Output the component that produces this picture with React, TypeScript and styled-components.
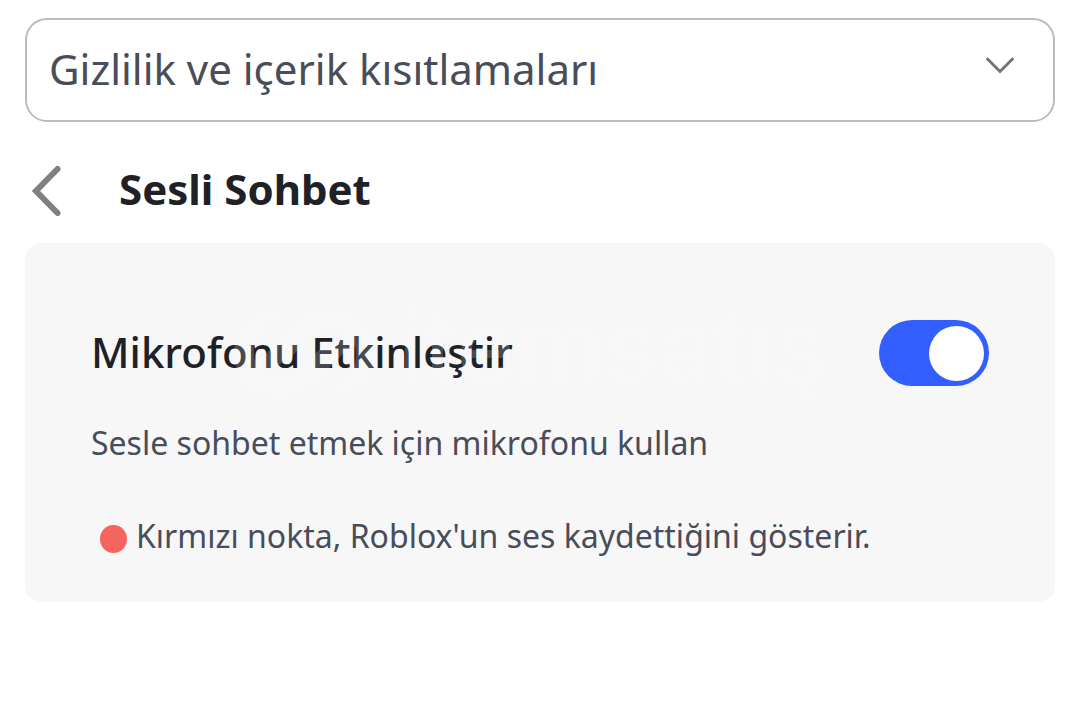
import React, { useState } from "react";
import styled, { createGlobalStyle } from "styled-components";

const GlobalStyle = createGlobalStyle`
  *, *::before, *::after { box-sizing: border-box; }
  body {
    margin: 0;
    background: #ffffff;
    color: #494d5a;
    font-family: "Noto Sans", sans-serif;
  }
`;

const Page = styled.main`
  padding: 18px 25px;
`;

const SelectField = styled.div`
  display: grid;
  align-items: center;

  > * { grid-area: 1 / 1; }
`;

const Select = styled.select`
  appearance: none;
  width: 100%;
  height: 104px;
  padding: 0 80px 4px 22px;
  border: 2px solid #bbbcc3;
  border-radius: 22px;
  background: #ffffff;
  color: #494d5a;
  font: 400 42px "Noto Sans", sans-serif;
`;

const SelectArrow = styled.svg`
  justify-self: end;
  width: 32px;
  height: 20px;
  margin: 0 39px 10px 0;
  pointer-events: none;
`;

const Header = styled.header`
  display: flex;
  align-items: center;
  gap: 54px;
  height: 121px;
  padding: 17px 6px 0;
`;

const BackButton = styled.button`
  display: flex;
  padding: 0;
  border: 0;
  background: none;
  cursor: pointer;
`;

const Title = styled.h1`
  margin: 0;
  padding-bottom: 4px;
  color: #202127;
  font-size: 42px;
  font-weight: 700;
  line-height: 56px;
`;

const Card = styled.section`
  position: relative;
  padding: 77px 66px 42px;
  border-radius: 16px;
  background: #f7f7f7;
`;

const SettingRow = styled.div`
  display: flex;
  align-items: center;
  justify-content: space-between;
`;

const SettingLabel = styled.label`
  padding-bottom: 2px;
  color: #202127;
  font-size: 42px;
  font-weight: 500;
  line-height: 64px;
`;

const Switch = styled.input`
  appearance: none;
  display: flex;
  align-items: center;
  width: 110px;
  height: 66px;
  margin: 0;
  padding: 0 5px;
  border-radius: 33px;
  background: #bbbcc3;
  cursor: pointer;

  &::before {
    content: "";
    width: 55px;
    height: 55px;
    border-radius: 50%;
    background: #ffffff;
  }

  &:checked {
    justify-content: flex-end;
    background: #335fff;
  }
`;

const Description = styled.p`
  margin: 33px 0 0;
  font-size: 32px;
  line-height: 48px;
`;

const Note = styled.p`
  display: flex;
  align-items: center;
  gap: 9px;
  margin: 45px 0 0;
  padding-left: 9px;
  font-size: 32px;
  line-height: 48px;
`;

const Dot = styled.span`
  flex: none;
  width: 27px;
  height: 28px;
  margin-top: 6px;
  border-radius: 50%;
  background: #f5645d;
`;

const Watermark = styled.svg`
  position: absolute;
  top: 57px;
  left: 205px;
  width: 630px;
  height: 110px;
  overflow: visible;
  opacity: 0.18;
  pointer-events: none;
`;

export default function App() {
  const [enabled, setEnabled] = useState(true);

  return (
    <>
      <GlobalStyle />
      <Page>
        <SelectField>
          <Select aria-label="Ayar kategorisi">
            <option>Gizlilik ve içerik kısıtlamaları</option>
          </Select>
          <SelectArrow viewBox="0 0 32 20" fill="none" aria-hidden="true">
            <path d="M3.500 4 16 16.500 28.500 4" stroke="#757575" strokeWidth="3" strokeLinecap="round" />
          </SelectArrow>
        </SelectField>
        <Header>
          <BackButton type="button" aria-label="Geri">
            <svg width="34" height="54" viewBox="0 0 34 54" fill="none" aria-hidden="true">
              <path d="M26.500 5 5 27 26.500 49" stroke="#808080" strokeWidth="6" strokeLinecap="round" />
            </svg>
          </BackButton>
          <Title>Sesli Sohbet</Title>
        </Header>
        <Card>
          <SettingRow>
            <SettingLabel htmlFor="microphone">Mikrofonu Etkinleştir</SettingLabel>
            <Switch
              id="microphone"
              type="checkbox"
              role="switch"
              checked={enabled}
              onChange={(event) => setEnabled(event.target.checked)}
            />
          </SettingRow>
          <Description>Sesle sohbet etmek için mikrofonu kullan</Description>
          <Note>
            <Dot />
            Kırmızı nokta, Roblox'un ses kaydettiğini gösterir.
          </Note>
          <Watermark viewBox="0 0 630 110" fill="#ffffff" aria-hidden="true">
            <path d="M58 10C24 10 4 32 4 54s20 43 44 43c18 0 30-8 42-20l20-20c10-10 18-14 26-14-16-10-34-4-48 8L70 69C62 77 54 81 46 79 32 77 24 67 24 53c0-20 14-34 34-43Z" />
            <path d="M92 97c34 0 54-22 54-44S126 10 102 10C84 10 72 18 60 30L40 50C30 60 22 64 14 64c16 10 34 4 48-8l18-18c8-8 16-12 24-10 14 2 22 12 22 26 0 20-14 34-34 43Z" />
            <text x="168" y="82" fontFamily="Inter, sans-serif" fontSize="100" fontWeight="500">itemsatış</text>
            <text x="580" y="97" fontFamily="Inter, sans-serif" fontSize="20">.com</text>
          </Watermark>
        </Card>
      </Page>
    </>
  );
}
